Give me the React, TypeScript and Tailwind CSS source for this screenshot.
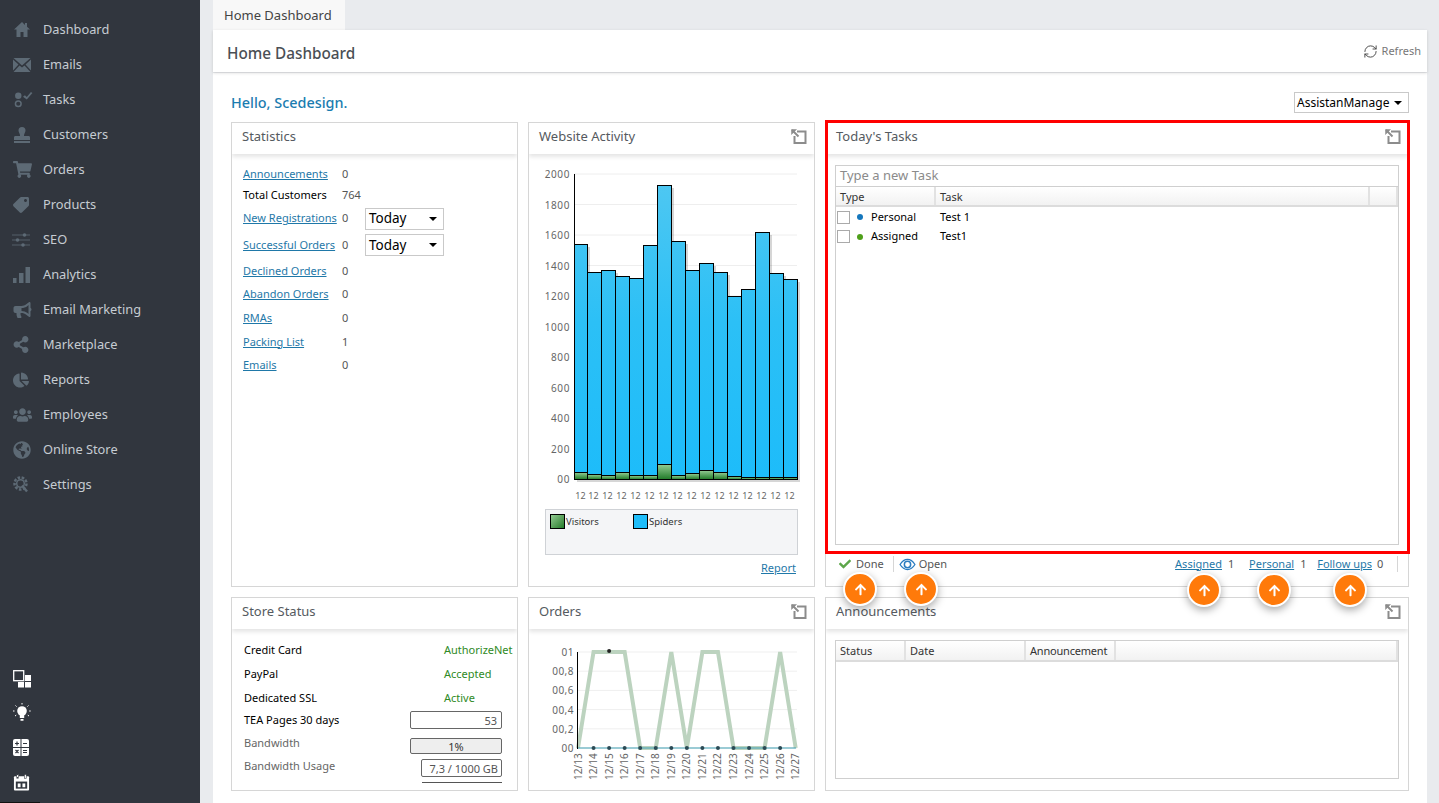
import React from 'react';
import { FaShoppingCart, FaTag, FaBullhorn, FaShareAlt, FaChartPie, FaUsers, FaGlobeAmericas, FaCheck, FaArrowUp } from 'react-icons/fa';
import { RefreshCw } from 'lucide-react';

function HomeIcon({ className }: { className?: string }) {
  return (
    <svg viewBox="0 0 18 17" className={className} fill="currentColor">
      <path d="M9 1L1 8.500h2.500V16h4v-5h3v5h4V8.500H17l-3-2.700V2h-2v2z" />
    </svg>
  );
}

function MailIcon({ className }: { className?: string }) {
  return (
    <svg viewBox="0 0 18 14" className={className} fill="currentColor">
      <path d="M0.500 0h17L9 7.500z" />
      <path d="M0 1.500l5.500 5L0 12.500zM18 1.500l-5.500 5 5.500 6zM6.500 7.500L9 9.500l2.500-2 6 6.500H0.500z" />
    </svg>
  );
}

function TasksIcon({ className }: { className?: string }) {
  return (
    <svg viewBox="0 0 20 18" className={className} fill="currentColor">
      <circle cx="5" cy="5" r="3.400" />
      <circle cx="5" cy="13.500" r="3" fill="none" stroke="currentColor" strokeWidth="1.600" />
      <path d="M10 6l2-1.600 2 2L18.400 1 20 2.200 14 9z" />
    </svg>
  );
}

function PersonIcon({ className }: { className?: string }) {
  return (
    <svg viewBox="0 0 16 16" className={className} fill="currentColor">
      <path d="M8 0a3.500 3.500 0 0 1 3.500 3.500c0 2-1.500 3-1.500 5v.5h4.500c1 0 1.500.6 1.500 1.500V13H0v-2.500C0 9.600.5 9 1.500 9H6v-.5C6 6.500 4.500 5.500 4.500 3.500A3.500 3.500 0 0 1 8 0zM0 14h16v2H0z" />
    </svg>
  );
}

function SlidersIcon({ className }: { className?: string }) {
  return (
    <svg viewBox="0 0 18 16" className={className} fill="currentColor" stroke="currentColor">
      <path d="M0 3h18M0 8h18M0 13h18" strokeWidth="0.800" />
      <circle cx="12.500" cy="3" r="1.800" stroke="none" />
      <circle cx="5.500" cy="8" r="1.800" stroke="none" />
      <circle cx="11" cy="13" r="1.800" stroke="none" />
    </svg>
  );
}

function BarsIcon({ className }: { className?: string }) {
  return (
    <svg viewBox="0 0 17 16" className={className} fill="currentColor">
      <rect x="0" y="11" width="3.500" height="5" />
      <rect x="6" y="6" width="4.500" height="10" />
      <rect x="12.500" y="0" width="4.500" height="16" />
    </svg>
  );
}

function GearSearchIcon({ className }: { className?: string }) {
  return (
    <svg viewBox="0 0 16 17" className={className} fill="none" stroke="currentColor">
      <circle cx="7.500" cy="7.500" r="6" strokeWidth="2.500" strokeDasharray="2.600 1.500" />
      <circle cx="7.500" cy="7.500" r="3.800" strokeWidth="1.500" />
      <path d="M9 9.500l5 6" strokeWidth="2.400" />
    </svg>
  );
}

function ExpandIcon() {
  return (
    <svg viewBox="0 0 16 16" className="w-[16px] h-[16px] text-[#8c8c8c]" fill="none" stroke="currentColor">
      <path d="M6 2.500h8.500v11.500H3.500V7" strokeWidth="2" />
      <path d="M1 1l6.500 6.500" strokeWidth="2" />
      <path d="M0.500 0.500h5l-5 5z" fill="currentColor" strokeWidth="0.500" />
    </svg>
  );
}

function EyeIcon() {
  return (
    <svg viewBox="0 0 18 14" className="w-[17px] h-[13px]" fill="none" stroke="#2a7cc0">
      <path d="M1 7c2.500-4 5-5.500 8-5.500S14.500 3 17 7c-2.500 4-5 5.500-8 5.500S3.500 11 1 7z" strokeWidth="1.400" />
      <circle cx="9" cy="7" r="3.400" strokeWidth="1.600" />
    </svg>
  );
}

function LayoutIcon() {
  return (
    <svg viewBox="0 0 18 18" className="w-[18px] h-[18px] shrink-0" fill="#fff">
      <rect x="0.700" y="0.700" width="10" height="10" fill="none" stroke="#fff" strokeWidth="1.300" />
      <rect x="12" y="5" width="6" height="6" />
      <rect x="5" y="12" width="6" height="5.500" />
      <rect x="12" y="12" width="6" height="5.500" />
    </svg>
  );
}

function BulbIcon() {
  return (
    <svg viewBox="0 0 18 19" className="w-[18px] h-[19px] mt-[15px] shrink-0" fill="#fff">
      <circle cx="9" cy="8" r="4.800" />
      <path d="M6.800 11h4.400v4H6.800zM7.500 16h3v1.800h-3z" />
      <path d="M9 0v1.800M2.500 2.500l1.300 1.300M15.500 2.500l-1.300 1.300M0 8h1.800M16.200 8H18M2 13l1.400-1M16 13l-1.400-1" stroke="#fff" strokeWidth="1" strokeDasharray="1.500 0.500" />
    </svg>
  );
}

function CalcIcon() {
  return (
    <svg viewBox="0 0 16 17" className="w-[16px] h-[17px] mt-[17px] shrink-0">
      <rect width="16" height="17" rx="2" fill="#fff" />
      <path d="M8 0v17M0 8.500h16" stroke="#31363e" strokeWidth="1" />
      <path d="M2 4.500h4M4 2.500v4M10 4.500h4M2.500 11l3 3M5.500 11l-3 3M10 11.500h4M10 13.500h4" stroke="#31363e" strokeWidth="1.200" fill="none" />
    </svg>
  );
}

function CalendarIcon() {
  return (
    <svg viewBox="0 0 18 18" className="w-[17px] h-[17px] mt-[18px] shrink-0">
      <rect x="1" y="2.500" width="16" height="15" rx="1" fill="#fff" />
      <rect x="4" y="0.500" width="2" height="4" fill="#fff" stroke="#31363e" strokeWidth="0.600" />
      <rect x="12" y="0.500" width="2" height="4" fill="#fff" stroke="#31363e" strokeWidth="0.600" />
      <rect x="3" y="8" width="12" height="7.500" fill="#31363e" />
      <rect x="5" y="10" width="3" height="4" fill="#fff" />
      <rect x="10" y="10" width="3" height="4" fill="#fff" />
    </svg>
  );
}

const navItems = [
  { label: 'Dashboard', icon: <HomeIcon className="w-[18px] h-[17px]" /> },
  { label: 'Emails', icon: <MailIcon className="w-[18px] h-[14px]" /> },
  { label: 'Tasks', icon: <TasksIcon className="w-[20px] h-[17px]" /> },
  { label: 'Customers', icon: <PersonIcon className="w-[16px] h-[16px] ml-[1px]" /> },
  { label: 'Orders', icon: <FaShoppingCart className="w-[19px] h-[17px]" /> },
  { label: 'Products', icon: <FaTag className="w-[16px] h-[16px] rotate-90" /> },
  { label: 'SEO', icon: <SlidersIcon className="w-[18px] h-[16px] ml-[-1px]" /> },
  { label: 'Analytics', icon: <BarsIcon className="w-[17px] h-[16px]" /> },
  { label: 'Email Marketing', icon: <FaBullhorn className="w-[19px] h-[16px]" /> },
  { label: 'Marketplace', icon: <FaShareAlt className="w-[16px] h-[17px]" /> },
  { label: 'Reports', icon: <FaChartPie className="w-[16px] h-[16px]" /> },
  { label: 'Employees', icon: <FaUsers className="w-[19px] h-[16px]" /> },
  { label: 'Online Store', icon: <FaGlobeAmericas className="w-[18px] h-[18px]" /> },
  { label: 'Settings', icon: <GearSearchIcon className="w-[16px] h-[17px]" /> },
];

function Sidebar() {
  return (
    <aside className="relative w-[200px] shrink-0 h-full bg-[#31363e] flex flex-col pt-[12px] pb-[12px]">
      {navItems.map((item) => (
        <div key={item.label} className="h-[35px] shrink-0 flex items-center text-[12.8px] text-[#c6ccd2]">
          <span className="w-[43px] pl-[13px] flex items-center text-[#5d6a75]">{item.icon}</span>
          {item.label}
        </div>
      ))}
      <div className="mt-auto flex flex-col pl-[13px]">
        <LayoutIcon />
        <BulbIcon />
        <CalcIcon />
        <CalendarIcon />
      </div>
      <div className="absolute left-0 bottom-0 w-[40px] h-[1px] bg-[#111]" />
    </aside>
  );
}

function Panel({ title, expand, children }: { title: string; expand?: boolean; children: React.ReactNode }) {
  return (
    <section className="border border-[#d6d6d6] bg-white flex flex-col overflow-hidden min-h-0">
      <header className="h-[31px] shrink-0 flex items-center justify-between pl-[10px] pr-[7px] pb-[4px] text-[13px] text-[#555a60] shadow-[0_3px_4px_rgba(0,0,0,0.1)]">
        {title}
        {expand && <ExpandIcon />}
      </header>
      {children}
    </section>
  );
}

const linkCls = 'text-[#1f78a8] underline';

function TodaySelect() {
  return (
    <div className="w-[79px] h-[22px] border border-[#c9c9c9] flex items-center justify-between pl-[3px] pr-[6px] text-[13.5px] text-black">
      Today
      <span className="w-0 h-0 border-x-[4px] border-x-transparent border-t-[4px] border-t-black" />
    </div>
  );
}

const statRows = [
  { label: 'Announcements', value: '0', h: 'h-[21px]', link: true },
  { label: 'Total Customers', value: '764', h: 'h-[21px]', link: false },
  { label: 'New Registrations', value: '0', h: 'h-[25px]', link: true, select: true },
  { label: 'Successful Orders', value: '0', h: 'h-[28px]', link: true, select: true },
  { label: 'Declined Orders', value: '0', h: 'h-[24px]', link: true },
  { label: 'Abandon Orders', value: '0', h: 'h-[23px]', link: true },
  { label: 'RMAs', value: '0', h: 'h-[24px]', link: true },
  { label: 'Packing List', value: '1', h: 'h-[24px]', link: true },
  { label: 'Emails', value: '0', h: 'h-[23px]', link: true },
];

function Statistics() {
  return (
    <div className="pt-[10px] pl-[11px] text-[11px]">
      {statRows.map((r) => (
        <div key={r.label} className={`${r.h} flex items-center`}>
          <span className={`w-[99px] shrink-0 whitespace-nowrap ${r.link ? linkCls : 'text-black'}`}>{r.label}</span>
          <span className="w-[23px] shrink-0 text-[#555]">{r.value}</span>
          {r.select && <TodaySelect />}
        </div>
      ))}
    </div>
  );
}

const barX = [574, 587, 601, 615, 629, 643, 657, 671, 685, 699, 713, 727, 741, 755, 769, 783, 797];
const barTop = [244, 272, 270, 276, 278, 245, 185, 241, 270, 263, 272, 296, 289, 232, 273, 279];
const greenTop = [472, 474, 475, 472, 475, 475, 464, 475, 473, 470, 472, 476, 477, 477, 477, 477];
const yLabels = ['2000', '1800', '1600', '1400', '1200', '1000', '800', '600', '400', '200', '00'];

function ActivityChart() {
  return (
    <svg viewBox="540 165 270 340" className="w-[270px] h-[340px] block shrink-0 ml-[11px] mt-[11px]">
      <defs>
        <linearGradient id="sky" x1="0" y1="165" x2="0" y2="480" gradientUnits="userSpaceOnUse">
          <stop offset="0" stopColor="#52c8f1" />
          <stop offset="0.500" stopColor="#2cc0f6" />
          <stop offset="1" stopColor="#1dbcfa" />
        </linearGradient>
        <linearGradient id="leaf" x1="0" y1="0" x2="0" y2="1">
          <stop offset="0" stopColor="#93cc93" />
          <stop offset="1" stopColor="#1f7a27" />
        </linearGradient>
      </defs>
      {yLabels.map((l, i) => (
        <g key={l}>
          <line x1="574" x2="797" y1={174 + i * 30.5} y2={174 + i * 30.5} stroke="#eeeeee" />
          <text x="570" y={178 + i * 30.5} textAnchor="end" fontSize="10" letterSpacing="0.600" fill="#666">{l}</text>
        </g>
      ))}
      {barTop.map((t, i) => (
        <rect key={i} x={barX[i] + 3} y={t + 3} width={barX[i + 1] - barX[i]} height={479 - t} fill="#000" opacity="0.16" />
      ))}
      {barTop.map((t, i) => (
        <g key={i}>
          <rect x={barX[i] + 0.5} y={t + 0.5} width={barX[i + 1] - barX[i]} height={479 - t} fill="url(#sky)" stroke="#000" />
          <rect x={barX[i] + 0.5} y={greenTop[i] + 0.5} width={barX[i + 1] - barX[i]} height={479 - greenTop[i]} fill="url(#leaf)" stroke="#000" />
          <text x={barX[i] + 6.5} y="499" textAnchor="middle" fontSize="9" fill="#666">12</text>
        </g>
      ))}
      <line x1="574.500" x2="574.500" y1="174" y2="480" stroke="#000" />
    </svg>
  );
}

function WebsiteActivity() {
  return (
    <>
      <ActivityChart />
      <div className="ml-[16px] mt-[4px] w-[253px] h-[46px] shrink-0 bg-[#f4f5f7] border border-[#cfd2d6] flex items-start pt-[4px] pl-[4px] text-[9.5px] text-[#333]">
        <span className="w-[15px] h-[15px] border border-black bg-gradient-to-br from-[#93cc93] to-[#1f7a27]" />
        <span className="w-[68px] pl-[1px] pt-[1px]">Visitors</span>
        <span className="w-[15px] h-[15px] border border-black bg-[#1fbdf9]" />
        <span className="pl-[1px] pt-[1px]">Spiders</span>
      </div>
      <div className="mt-[5px] pr-[18px] text-right text-[11px]">
        <span className={linkCls}>Report</span>
      </div>
    </>
  );
}

function OrdersChart() {
  const vals = [0, 1, 1, 1, 0, 0, 1, 0, 1, 1, 0, 0, 0, 1, 0];
  const days = ['12/13', '12/14', '12/15', '12/16', '12/17', '12/18', '12/19', '12/20', '12/21', '12/22', '12/23', '12/24', '12/25', '12/26', '12/27'];
  const px = (i: number) => 578 + i * 15.55;
  const py = (v: number) => 748 - v * 96;
  const ticks = ['01', '00,8', '00,6', '00,4', '00,2', '00'];
  return (
    <svg viewBox="540 640 270 145" className="w-[270px] h-[145px] block shrink-0 ml-[11px] mt-[11px]">
      {ticks.map((t, i) => (
        <g key={t}>
          <line x1="578" x2="797" y1={652 + i * 19.2} y2={652 + i * 19.2} stroke="#efefef" />
          <text x="574" y={656 + i * 19.2} textAnchor="end" fontSize="10" letterSpacing="0.500" fill="#666">{t}</text>
        </g>
      ))}
      <polyline points={vals.map((v, i) => `${px(i)},${py(v)}`).join(' ')} fill="none" stroke="#bcd3bf" strokeWidth="4" />
      <line x1="578" x2="796" y1="748" y2="748" stroke="#3f9fb3" strokeWidth="1" />
      <line x1="577.500" x2="577.500" y1="652" y2="749" stroke="#000" />
      {days.map((d, i) => (
        <g key={d}>
          {i > 0 && i < 14 && <circle cx={px(i)} cy="748" r="2" fill="#2b4a55" />}
          <text transform={`translate(${px(i) + 3.5} 780) rotate(-90)`} fontSize="10" fill="#666">{d}</text>
        </g>
      ))}
      <circle cx={px(2)} cy="651" r="2" fill="#222" />
    </svg>
  );
}

function StoreStatus() {
  const rows = [
    { label: 'Credit Card', value: 'AuthorizeNet' },
    { label: 'PayPal', value: 'Accepted' },
    { label: 'Dedicated SSL', value: 'Active' },
  ];
  return (
    <div className="pt-[9px] pl-[12px] text-[11px] text-black">
      {rows.map((r) => (
        <div key={r.label} className="h-[24px] flex items-center">
          <span className="w-[200px] shrink-0">{r.label}</span>
          <span className="text-[#2f8a25] whitespace-nowrap">{r.value}</span>
        </div>
      ))}
      <div className="h-[20px] flex items-center justify-between pr-[15px]">
        TEA Pages 30 days
        <span className="w-[92px] h-[18px] border border-[#666] rounded-[2px] text-right pr-[4px] leading-[17px] text-[#555]">53</span>
      </div>
      <div className="mt-[4px] h-[24px] flex items-center justify-between pr-[15px] text-[#666]">
        <span className="mt-[-6px]">Bandwidth</span>
        <span className="w-[92px] h-[16px] border border-[#666] rounded-[2px] bg-[#eeeeee] text-center leading-[15px] text-[#333]">1%</span>
      </div>
      <div className="h-[20px] flex items-center justify-between pr-[15px] text-[#666]">
        <span className="mt-[-4px]">Bandwidth Usage</span>
        <span className="w-[81px] h-[18px] border border-[#666] rounded-[2px] text-right pr-[3px] leading-[17px] text-[#555]">7,3 / 1000 GB</span>
      </div>
      <div className="ml-[178px] mt-[4px] w-[80px] h-[1px] bg-[#555]" />
    </div>
  );
}

function GridHeadCell({ className, children }: { className: string; children?: React.ReactNode }) {
  return (
    <div className={`${className} h-full flex items-center px-[4px] border-r-2 border-r-[#e2e2e2] bg-gradient-to-b from-white to-[#f2f2f2]`}>
      {children}
    </div>
  );
}

function TodaysTasks() {
  return (
    <>
      <div className="mx-[9px] mt-[11px] h-[380px] shrink-0 border border-[#cfcfcf] flex flex-col text-[11px] text-[#333]">
        <div className="h-[21px] shrink-0 border-b border-[#cfcfcf] flex items-center pl-[4px] text-[13px] text-[#8b8b8b]">Type a new Task</div>
        <div className="h-[20px] shrink-0 flex border-b-2 border-b-[#dcdcdc] text-[#333]">
          <GridHeadCell className="w-[100px] pt-[2px]">Type</GridHeadCell>
          <GridHeadCell className="w-[434px] pt-[2px]">Task</GridHeadCell>
          <GridHeadCell className="w-[28px]" />
        </div>
        <div className="h-[20px] flex items-center text-black">
          <span className="ml-[1px] w-[13px] h-[13px] border border-[#aaa]" />
          <span className="ml-[7px] w-[6px] h-[6px] rounded-full bg-[#1577bd]" />
          <span className="ml-[8px] w-[69px]">Personal</span>
          <span>Test 1</span>
        </div>
        <div className="h-[19px] flex items-center text-black">
          <span className="ml-[1px] w-[13px] h-[13px] border border-[#aaa]" />
          <span className="ml-[7px] w-[6px] h-[6px] rounded-full bg-[#4fa01a]" />
          <span className="ml-[8px] w-[69px]">Assigned</span>
          <span>Test1</span>
        </div>
      </div>
      <div className="h-[26px] mt-[6px] ml-[12px] mr-[10px] flex items-center text-[11px] text-[#555]">
        <FaCheck className="w-[14px] h-[12px] text-[#5da64a]" />
        <span className="ml-[4px]">Done</span>
        <span className="ml-[9px] mr-[5px] w-[1px] h-[16px] bg-[#d6d6d6]" />
        <EyeIcon />
        <span className="ml-[3px]">Open</span>
        <span className={`ml-auto ${linkCls}`}>Assigned</span>
        <span className="ml-[6px] w-[21px]">1</span>
        <span className={linkCls}>Personal</span>
        <span className="ml-[6px] w-[17px]">1</span>
        <span className={linkCls}>Follow ups</span>
        <span className="ml-[5px] w-[20px]">0</span>
        <span className="w-[1px] h-[16px] bg-[#d6d6d6]" />
      </div>
    </>
  );
}

function Announcements() {
  return (
    <div className="mx-[9px] mt-[11px] h-[139px] border border-[#cfcfcf] text-[11px] text-[#333]">
      <div className="h-[21px] flex border-b-2 border-b-[#dcdcdc]">
        <GridHeadCell className="w-[70px] pt-[1px]">Status</GridHeadCell>
        <GridHeadCell className="w-[120px] pt-[1px]">Date</GridHeadCell>
        <GridHeadCell className="w-[90px] pt-[1px] tracking-[-0.2px]">Announcement</GridHeadCell>
        <GridHeadCell className="flex-1" />
      </div>
    </div>
  );
}

// callout bubbles that sit over the panels
const bubbles = [
  { cls: 'left-[843px] top-[572px]' },
  { cls: 'left-[904px] top-[572px]' },
  { cls: 'left-[1187px] top-[573px]' },
  { cls: 'left-[1257px] top-[573px]' },
  { cls: 'left-[1333px] top-[573px]' },
];

export default function App() {
  return (
    <div className="relative h-[803px] w-full overflow-hidden flex bg-[#e9ebee] font-['Open_Sans',sans-serif]">
      <Sidebar />
      <div className="flex-1 min-w-0 pl-[13px] pr-[12px] flex flex-col">
        <div className="h-[30px] w-[132px] shrink-0 bg-[#f8f8f8] flex items-center pl-[11px] pt-[2px] text-[13px] text-[#444]">Home Dashboard</div>
        <div className="h-[42px] shrink-0 bg-white flex items-center justify-between pl-[14px] pr-[6px] shadow-[0_1px_3px_rgba(0,0,0,0.15)] z-10">
          <h1 className="pt-[4px] text-[15.3px] font-medium text-[#4a4f55]">Home Dashboard</h1>
          <span className="flex items-center gap-[4px] pt-[1px] text-[11px] text-[#777]">
            <RefreshCw className="w-[15px] h-[15px] text-[#444]" strokeWidth={1.5} />
            Refresh
          </span>
        </div>
        <main className="flex-1 bg-white mt-[1px] pl-[18px] pt-[19px]">
          <div className="w-[1178px] h-[21px] flex items-center justify-between">
            <span className="text-[14.4px] font-medium text-[#1a7cb0]">Hello, Scedesign.</span>
            <div className="w-[115px] h-[21px] border border-[#c9c9c9] flex items-center justify-between pl-[2px] pr-[6px] pt-[1px] text-[12px] text-black">
              AssistanManage
              <span className="w-0 h-0 border-x-[4px] border-x-transparent border-t-[4px] border-t-black" />
            </div>
          </div>
          <div className="mt-[9px] grid grid-cols-[287px_287px_584px] grid-rows-[465px_194px] gap-[10px]">
            <Panel title="Statistics"><Statistics /></Panel>
            <Panel title="Website Activity" expand><WebsiteActivity /></Panel>
            <Panel title="Today's Tasks" expand><TodaysTasks /></Panel>
            <Panel title="Store Status"><StoreStatus /></Panel>
            <Panel title="Orders" expand><OrdersChart /></Panel>
            <Panel title="Announcements" expand><Announcements /></Panel>
          </div>
        </main>
      </div>
      <div className="absolute left-[825px] top-[120px] w-[585px] h-[434px] border-[3px] border-[#ff0000] pointer-events-none" />
      {bubbles.map((b) => (
        <div key={b.cls} className={`absolute ${b.cls} w-[34px] h-[34px] rounded-full bg-[#ff7a0a] border-2 border-white shadow-[0_3px_8px_rgba(0,0,0,0.35)] flex items-center justify-center`}>
          <FaArrowUp className="w-[13px] h-[13px] text-white" />
        </div>
      ))}
    </div>
  );
}
